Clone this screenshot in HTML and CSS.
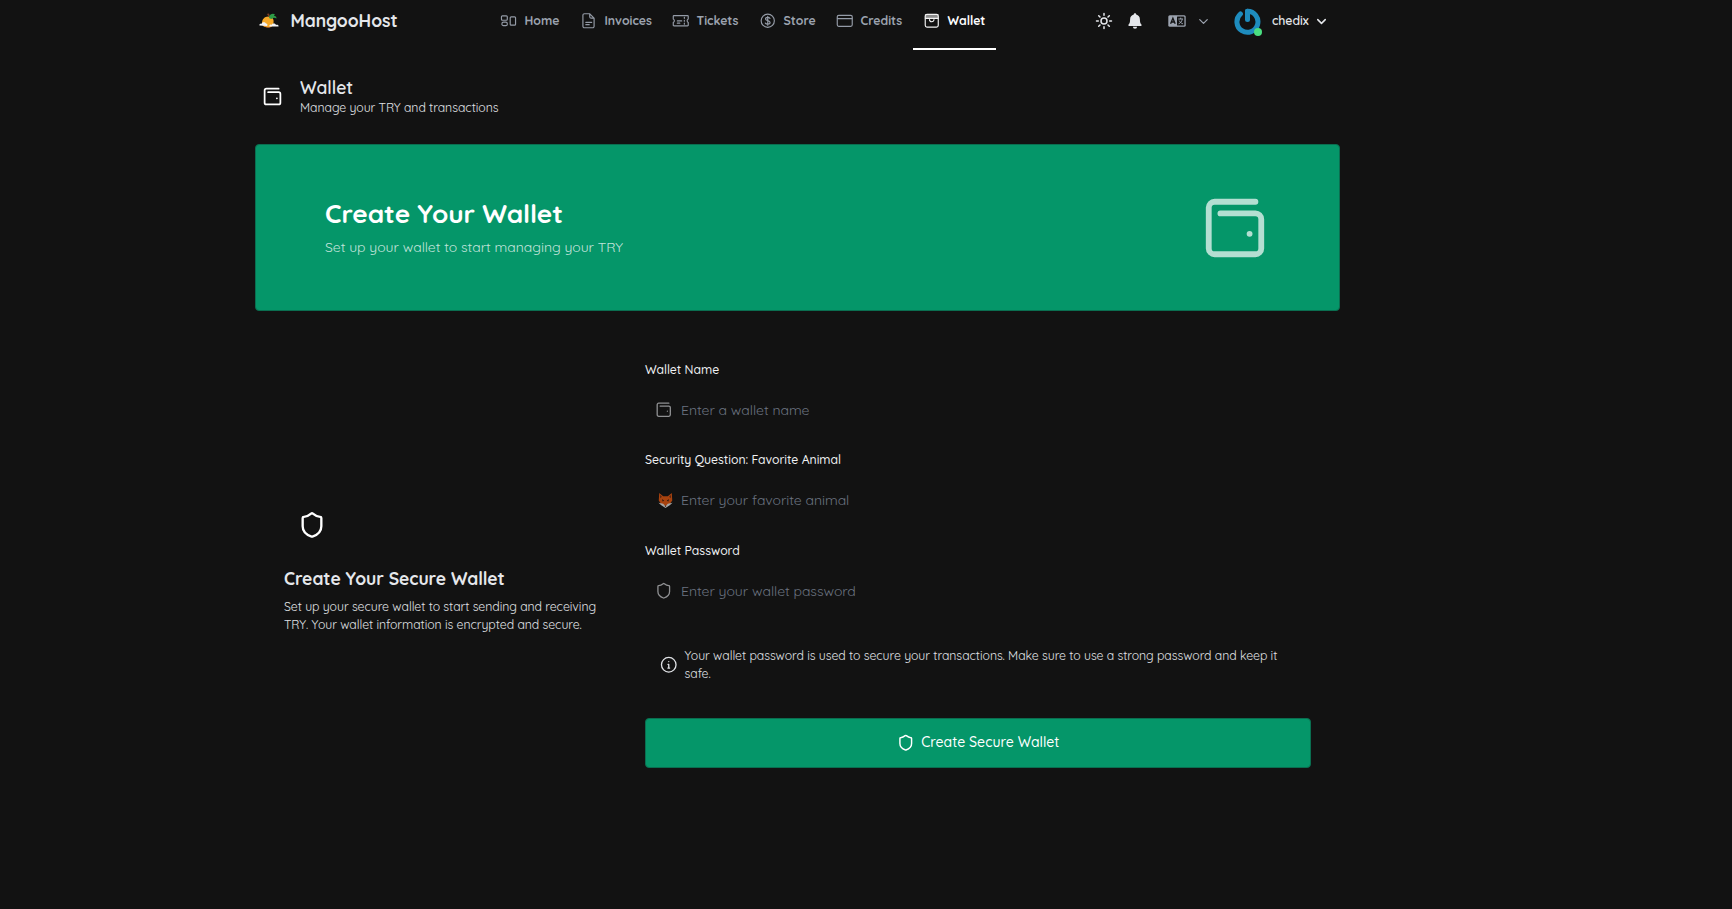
FILE: index.html
```html
<!DOCTYPE html>
<html lang="en">
<head>
<meta charset="utf-8">
<title>MangooHost - Wallet</title>
<link rel="stylesheet" href="styles.css">
</head>
<body>
<svg class="defs" aria-hidden="true">
  <symbol id="wallet" viewBox="0 0 24 24"><path d="M17 14h.01M7 7h12a2 2 0 0 1 2 2v10a2 2 0 0 1-2 2H5a2 2 0 0 1-2-2V5a2 2 0 0 1 2-2h14"/></symbol>
  <symbol id="shield" viewBox="0 0 24 24"><path d="M20 13c0 5-3.5 7.5-7.66 8.95a1 1 0 0 1-.67-.01C7.5 20.5 4 18 4 13V6a1 1 0 0 1 1-1c2 0 4.5-1.2 6.24-2.72a1.17 1.17 0 0 1 1.52 0C14.51 3.81 17 5 19 5a1 1 0 0 1 1 1z"/></symbol>
  <symbol id="chevron" viewBox="0 0 24 24"><path d="m6 9 6 6 6-6"/></symbol>
</svg>
<div class="container">
  <header class="topbar">
    <a class="brand">
      <svg class="logo" viewBox="0 0 20 16">
        <path d="M3 10C3 6 6 3 10 3.500c4 .5 5 3 4.500 6.500-.5 3.500-3 5-6 4.500C5 14 3 13 3 10z" fill="#f7a928"/>
        <path d="M4 12c2 2.500 7 3 9 .5-1 2.500-6 3-9-.5z" fill="#e2553b"/>
        <path d="M9 4c0-1.500 0-2.500-1.500-3l2.500-.5 1 3z" fill="#7c3f22"/>
        <path d="M10 4c1-3 4-4 6-2.500-1 .5-1 1-.5 1.500 1.500 0 2 1 2 2.500-2-1-3.500-1-4.500.5C11 6 10 5 10 4z" fill="#2e9b46"/>
        <path d="M.5 12.500c-.5-1.500 1-2 2-1.500 0-2 3.500-2.500 4.500-.5 1.500 0 2 1.500 1 2.500zM10.500 13.500c-.5-1.500 1-2.500 2-1.500 1-2.500 4.500-1.500 4.500 0 1-.5 3 0 2.500 1.500z" fill="#f3f3f5"/>
      </svg>
      <span>MangooHost</span>
    </a>
    <nav class="nav">
      <a class="nav-item"><svg viewBox="0 0 18 18"><rect x="1.500" y="4" width="6" height="4.500" rx="1"/><rect x="2" y="10.500" width="5.500" height="3.500" rx="1.500"/><rect x="10.500" y="5" width="5.500" height="8.500" rx="1"/></svg><span>Home</span></a>
      <a class="nav-item"><svg viewBox="0 0 18 18"><path d="M4.500 1.800H10l4.500 4.500v8.400a1.500 1.500 0 0 1-1.500 1.500H4.500A1.500 1.500 0 0 1 3 14.700V3.300a1.500 1.500 0 0 1 1.500-1.500zM10 1.800v3a1.500 1.500 0 0 0 1.500 1.500h3M6 10.700h6M6 13h3.500"/></svg><span>Invoices</span></a>
      <a class="nav-item"><svg viewBox="0 0 18 18"><path d="M2 3.700h14a.7.7 0 0 1 .7.7v2.800a2 2 0 0 0 0 3.600v2.800a.7.7 0 0 1-.7.7H2a.7.7 0 0 1-.7-.7v-2.800a2 2 0 0 0 0-3.600V4.400a.7.7 0 0 1 .7-.7zM5.500 9.200h4.500M5.500 11.500h2.500M12.700 5.500v1M12.700 8.500v1M12.700 11.500v1"/></svg><span>Tickets</span></a>
      <a class="nav-item"><svg viewBox="0 0 18 18"><circle cx="9" cy="9" r="6.800"/><path d="M11.300 6.500C10.700 5.800 10 5.600 9 5.600c-1.400 0-2.300.6-2.300 1.600C6.700 9.500 11.400 8.300 11.400 10.800c0 1-.9 1.700-2.400 1.700-1.100 0-2-.3-2.500-1.100M9 4.400v9.200"/></svg><span>Store</span></a>
      <a class="nav-item"><svg viewBox="0 0 18 18"><rect x="1.300" y="3.500" width="15.400" height="11.200" rx="1.500"/><path d="M1.500 6.800h15"/></svg><span>Credits</span></a>
      <a class="nav-item active"><svg viewBox="0 0 18 18"><path d="M2.500 3h13v3h-13z" fill="currentColor" opacity=".55"/><rect x="2.300" y="2.500" width="13.400" height="13" rx="1.800"/><path d="M2.500 6.500h13M6.700 7.700a2.300 2.300 0 0 0 4.600 0"/></svg><span>Wallet</span></a>
    </nav>
    <div class="tools">
      <svg class="sun" viewBox="0 0 18 18"><circle cx="9" cy="9" r="3"/><path d="M9 1.500v1.800M9 14.700v1.800M1.500 9h1.800M14.700 9h1.800M3.700 3.700 5 5M13 13l1.300 1.300M14.300 3.700 13 5M5 13l-1.300 1.300"/></svg>
      <svg class="bell" viewBox="0 0 18 18"><path d="M9 1.300c.7 0 1.200.5 1.200 1.100 2.300.6 3.700 2.400 3.700 4.800 0 3 .6 4.300 1.500 5.200.6.700.2 1.500-.6 1.500H3.200c-.8 0-1.200-.8-.6-1.500.9-.9 1.500-2.200 1.500-5.200 0-2.400 1.400-4.200 3.700-4.800 0-.6.5-1.100 1.200-1.100zM6.900 14.700h4.200a2.100 2.100 0 0 1-4.200 0z"/></svg>
      <svg class="language" viewBox="0 0 18 12"><rect x=".3" y=".3" width="17.400" height="11.400" rx="1.500" fill="#9ca3af"/><rect x="9" y="1.600" width="7.400" height="8.800" rx=".5" fill="#121212"/><path d="M2.600 8.800 4.900 3.200 7.200 8.800M3.500 7h2.800" stroke="#121212" stroke-width="1.300"/><path d="M10.300 4h4.800M12.700 2.700V4M14.300 4.200c-.5 2.200-1.700 3.700-3.700 4.600M11.200 5.600c.7 1.500 1.900 2.600 3.700 3.200" stroke="#9ca3af"/></svg>
      <svg class="chev muted"><use href="#chevron"/></svg>
      <div class="avatar">
        <svg viewBox="0 0 27 27"><path d="M13.500 3.300V11.500" fill="none" stroke="#1e8cbe" stroke-width="5" stroke-linecap="round"/><path d="M13.500 3.300A10.500 10.500 0 1 1 6.400 6" fill="none" stroke="#1e8cbe" stroke-width="5" stroke-linecap="round"/></svg>
        <i class="online"></i>
      </div>
      <span class="username">chedix</span>
      <svg class="chev"><use href="#chevron"/></svg>
    </div>
  </header>

  <main>
    <div class="page-title">
      <svg class="icon title-icon"><use href="#wallet"/></svg>
      <div><h1>Wallet</h1><p>Manage your TRY and transactions</p></div>
    </div>

    <section class="banner">
      <div><h2>Create Your Wallet</h2><p>Set up your wallet to start managing your TRY</p></div>
      <svg class="icon banner-icon"><use href="#wallet"/></svg>
    </section>

    <section class="setup">
      <div class="intro">
        <div class="intro-icon"><svg class="icon"><use href="#shield"/></svg></div>
        <h3>Create Your Secure Wallet</h3>
        <p>Set up your secure wallet to start sending and receiving<br>TRY. Your wallet information is encrypted and secure.</p>
      </div>
      <form class="form">
        <label class="field"><span class="label">Wallet Name</span>
          <span class="control"><svg class="icon"><use href="#wallet"/></svg><input type="text" placeholder="Enter a wallet name"></span></label>
        <label class="field"><span class="label">Security Question: Favorite Animal</span>
          <span class="control"><svg class="fox" viewBox="0 0 16 16"><path d="M1.300 0 5.500 3.500h5L14.700 0l.5 8-2.700 4L8 15.500 3.500 12 .8 8z" fill="#a8430f"/><path d="m2.200 2 1.900 2-1.700 1.600zM13.800 2l-1.900 2 1.700 1.600z" fill="#4c2414"/><path d="M.5 10.500 5.500 11.500 8 14l2.500-2.500 5-1-3 2.500L8 16l-4.500-3z" fill="#a5a5a5"/><path d="M4.300 6.500 6.500 8.300 5 9zM11.700 6.500 9.500 8.300l1.500.7zM7 13.500h2L8 15z" fill="#1b1310"/></svg><input type="text" placeholder="Enter your favorite animal"></span></label>
        <label class="field"><span class="label">Wallet Password</span>
          <span class="control"><svg class="icon"><use href="#shield"/></svg><input type="password" placeholder="Enter your wallet password"></span></label>
        <div class="notice">
          <svg class="icon" viewBox="0 0 24 24"><circle cx="12" cy="12" r="10"/><path d="M12 16.500v-5h-1M10.800 16.500h2.400M12 7.700h.01"/></svg>
          <p>Your wallet password is used to secure your transactions. Make sure to use a strong password and keep it<br>safe.</p>
        </div>
        <button class="submit" type="button"><svg class="icon"><use href="#shield"/></svg><span>Create Secure Wallet</span></button>
      </form>
    </section>
  </main>
</div>
</body>
</html>
```
FILE: styles.css
```css
* { box-sizing: border-box; }
body {
  margin: 0;
  min-height: 100vh;
  background: #121212;
  color: #e5e7eb;
  font: 12.25px/17.5px Quicksand, Lato, sans-serif;
}
h1, h2, h3, p { margin: 0; }
svg { display: block; flex: none; }
.defs { position: absolute; width: 0; height: 0; }
.icon {
  width: 17.5px;
  height: 17.5px;
  fill: none;
  stroke: currentColor;
  stroke-width: 2;
  stroke-linecap: round;
  stroke-linejoin: round;
}
.container { width: 1085px; margin-left: 255px; }

.topbar {
  display: grid;
  grid-template-columns: 234.5px 507px 1fr;
  height: 50px;
}
.brand {
  display: flex;
  align-items: center;
  gap: 11.5px;
  height: 42px;
  padding-left: 4px;
  font-size: 17.5px;
  font-weight: 700;
  letter-spacing: -.05px;
}
.logo { width: 20px; height: 16px; }
.nav {
  display: grid;
  grid-template-columns: 80px 92px 87px 77px 87px 83px;
}
.nav-item {
  display: flex;
  align-items: center;
  gap: 7px;
  padding: 0 0 6px 10.5px;
  border-bottom: 2px solid transparent;
  color: #9ca3af;
  font-weight: 700;
}
.nav-item svg {
  width: 17.5px;
  height: 17.5px;
  fill: none;
  stroke: currentColor;
  stroke-width: 1.2;
  stroke-linecap: round;
  opacity: .95;
}
.nav-item.active { color: #fff; border-color: #fff; }
.tools {
  display: flex;
  align-items: center;
  height: 42px;
  padding-left: 98px;
}
.sun { width: 18px; height: 18px; fill: none; stroke: #e5e7eb; stroke-width: 1.5; stroke-linecap: round; }
.bell { width: 18px; height: 18px; margin-left: 13px; fill: #e5e7eb; }
.language { width: 18px; height: 12px; margin-left: 24.7px; fill: none; }
.chev {
  width: 15px;
  height: 15px;
  margin-left: 5.5px;
  fill: none;
  stroke: #e5e7eb;
  stroke-width: 2.4;
  stroke-linecap: round;
  stroke-linejoin: round;
}
.chev.muted { margin-left: 10px; stroke: #9ca3af; stroke-width: 2; }
.avatar { position: relative; margin-left: 23.3px; }
.avatar svg { width: 27px; height: 27px; }
.online {
  position: absolute;
  right: -1px;
  bottom: -1px;
  width: 8px;
  height: 8px;
  border-radius: 50%;
  background: #4ade80;
}
.username { margin-left: 10.5px; font-weight: 600; letter-spacing: -.05px; }

.page-title { display: flex; align-items: center; height: 42px; margin-top: 25px; padding-left: 7px; }
.title-icon { width: 21px; height: 21px; margin-right: 17px; color: #fff; }
.page-title h1 { margin-top: -1px; font-size: 17.5px; line-height: 24.5px; font-weight: 600; }
.page-title p { color: #e0e2e6; letter-spacing: -.04px; }

.banner {
  display: flex;
  align-items: center;
  justify-content: space-between;
  height: 167px;
  margin-top: 27px;
  padding: 0 69px;
  border: 1px solid #0a6e50;
  border-radius: 4px;
  background: #059669;
}
.banner h2 { margin-top: -1px; color: #fff; font-size: 26.25px; line-height: 35px; font-weight: 700; letter-spacing: -.06px; }
.banner p { margin-top: 6px; color: rgba(255, 255, 255, .76); font-size: 14px; line-height: 21px; letter-spacing: -.04px; }
.banner-icon { width: 70px; height: 70px; color: #b4dfd2; }

.setup {
  display: grid;
  grid-template-columns: 361px 666px;
  align-items: center;
  padding: 50px 29px 0;
}
.intro-icon { display: grid; place-items: center; width: 56px; height: 56px; color: #fff; }
.intro-icon .icon { width: 28px; height: 28px; }
.intro { padding-top: 1px; }
.intro h3 { margin-top: 13.5px; font-size: 17.5px; line-height: 24.5px; font-weight: 700; letter-spacing: -.05px; }
.intro p { margin-top: 7.5px; color: #e0e2e6; letter-spacing: -.04px; }

.form { display: flex; flex-direction: column; }
.field { display: flex; flex-direction: column; gap: 7px; margin-bottom: 16.9px; }
.label { font-weight: 500; color: #f0f1f3; letter-spacing: -.03px; }
.control { display: flex; align-items: center; gap: 8.5px; height: 49px; padding-left: 10px; color: #8f9092; }
.control .icon { stroke-width: 1.8; }
.fox { width: 15px; height: 15px; margin-left: 2.5px; }
.control input {
  flex: 1;
  height: 49px;
  padding: 0;
  border: 0;
  outline: 0;
  background: transparent;
  color: #e5e7eb;
  font: inherit;
  font-size: 14px;
  letter-spacing: -.04px;
}
.control input::placeholder { color: #6b7280; opacity: 1; }
.notice {
  display: flex;
  align-items: center;
  gap: 7px;
  padding: 14.8px 14px 35.2px 15px;
  color: #e0e2e6;
  line-height: 18px;
  letter-spacing: -.04px;
  white-space: nowrap;
}
.notice .icon { stroke-width: 1.8; }
.submit {
  display: flex;
  align-items: center;
  justify-content: center;
  gap: 7px;
  height: 50px;
  padding: 0;
  border: 1px solid #0a6e50;
  border-radius: 4px;
  background: #059669;
  color: #fff;
  font: inherit;
  font-size: 14px;
  font-weight: 500;
}
```
